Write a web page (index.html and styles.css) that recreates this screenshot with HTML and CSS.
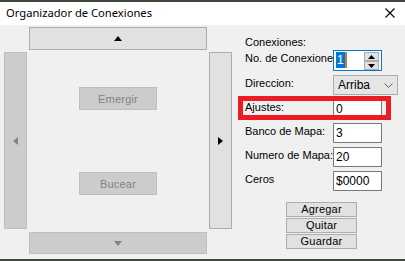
FILE: index.html
```html
<!DOCTYPE html>
<html lang="es">
<head>
  <meta charset="UTF-8">
  <meta name="viewport" content="width=device-width, initial-scale=1.0">
  <title>Organizador de Conexiones</title>
  <link rel="stylesheet" href="styles.css">
</head>
<body>
  <div class="desk-edge"></div>
  <div class="window">
    <header class="titlebar">
      <span class="title">Organizador de Conexiones</span>
      <svg class="close" width="10" height="10" viewBox="0 0 10 10">
        <path d="M0.5 0.5 L9.5 9.5 M9.5 0.5 L0.5 9.5" stroke="#000" stroke-width="1.1" fill="none"/>
      </svg>
    </header>

    <main class="client">
      <!-- map navigation pad -->
      <section class="nav-pad">
        <button class="btn nav-up">
          <svg width="8" height="5" viewBox="0 0 8 5"><polygon points="0,5 8,5 4,0" fill="#000"/></svg>
        </button>
        <button class="btn off nav-left">
          <svg width="5" height="8" viewBox="0 0 5 8"><polygon points="5,0 5,8 0,4" fill="#838383"/></svg>
        </button>
        <div class="nav-center">
          <button class="btn off action">Emergir</button>
          <button class="btn off action">Bucear</button>
        </div>
        <button class="btn nav-right">
          <svg width="5" height="8" viewBox="0 0 5 8"><polygon points="0,0 0,8 5,4" fill="#000"/></svg>
        </button>
        <button class="btn off nav-down">
          <svg width="8" height="5" viewBox="0 0 8 5"><polygon points="0,0 8,0 4,5" fill="#838383"/></svg>
        </button>
      </section>

      <!-- connection properties -->
      <section class="props">
        <div class="heading">Conexiones:</div>
        <div class="fields">
          <label class="lbl">No. de Conexiones</label>
          <div class="spin">
            <span class="sel">1</span><span class="caret"></span>
            <div class="spin-btns">
              <span class="spin-btn"><svg width="7" height="4" viewBox="0 0 7 4"><polygon points="0,4 7,4 3.5,0" fill="#000"/></svg></span>
              <span class="spin-btn"><svg width="7" height="4" viewBox="0 0 7 4"><polygon points="0,0 7,0 3.5,4" fill="#000"/></svg></span>
            </div>
          </div>

          <label class="lbl">Direccion:</label>
          <div class="combo">
            <span>Arriba</span>
            <svg width="9" height="5" viewBox="0 0 9 5"><path d="M0.5 0.5 L4.5 4.5 L8.5 0.5" stroke="#606060" fill="none"/></svg>
          </div>

          <label class="lbl">Ajustes:</label>
          <div class="field">0</div>

          <label class="lbl">Banco de Mapa:</label>
          <div class="field">3</div>

          <label class="lbl">Numero de Mapa:</label>
          <div class="field">20</div>

          <label class="lbl">Ceros</label>
          <div class="field">$0000</div>
        </div>

        <div class="actions">
          <button class="btn small">Agregar</button>
          <button class="btn small">Quitar</button>
          <button class="btn small">Guardar</button>
        </div>
      </section>

      <div class="highlight"></div>
    </main>
  </div>
  <div class="desk-edge"></div>
</body>
</html>
```

FILE: styles.css
```css
/* Classic windows dialog look */
body {
  margin: 0;
  width: 405px;
  height: 261px;
  overflow: hidden;
  background-color: #3d4a38;
  font-family: "Liberation Sans", Arial, sans-serif;
  font-size: 11px;
  color: #000;
}
.desk-edge {
  height: 2px;
  background-color: #3e4b3a;
}
.window {
  height: 257px;
  display: flex;
  flex-direction: column;
}
.titlebar {
  box-sizing: border-box;
  height: 23px;
  flex: none;
  background-color: #fff;
  display: flex;
  align-items: center;
  justify-content: space-between;
  padding: 0 10px 2px 6px;
}
.title {
  font-family: "Noto Sans", "Open Sans", sans-serif;
  font-size: 11.2px;
}
.close {
  display: block;
  margin-top: 1px;
}
.client {
  position: relative;
  flex: 1;
  background-color: #f0f0f0;
  display: flex;
  align-items: flex-start;
  padding: 2px 0 0 4px;
}

/* buttons */
.btn {
  box-sizing: border-box;
  margin: 0;
  padding: 0;
  background-color: #e1e1e1;
  border: 1px solid #adadad;
  font-family: "Liberation Sans", Arial, sans-serif;
  font-size: 11px;
  color: #000;
  display: flex;
  align-items: center;
  justify-content: center;
}
.btn.off {
  background-color: #cccccc;
  border-color: #bfbfbf;
  color: #838383;
}

/* navigation pad */
.nav-pad {
  display: grid;
  grid-template-columns: 23px 178px 23px;
  grid-template-rows: 23px 177px 23px;
  column-gap: 2px;
  row-gap: 2px;
}
.nav-up { grid-column: 2; grid-row: 1; }
.nav-left { grid-column: 1; grid-row: 2; }
.nav-right { grid-column: 3; grid-row: 2; }
.nav-down { grid-column: 2; grid-row: 3; margin-top: 1px; }
.nav-up svg { margin-top: -1px; }
.nav-center {
  grid-column: 2;
  grid-row: 2;
  display: flex;
  flex-direction: column;
  align-items: center;
  justify-content: space-between;
  padding: 35px 0 34px;
}
.action {
  width: 78px;
  height: 23px;
  letter-spacing: 0.2px;
}

/* properties column */
.props {
  margin-left: 13px;
  padding-top: 7px;
}
.heading {
  height: 16px;
  line-height: 14px;
  padding-top: 1px;
  box-sizing: border-box;
}
.fields {
  display: grid;
  grid-template-columns: 88px auto;
  grid-template-rows: 21px repeat(5, 20px);
  row-gap: 4px;
}
.lbl {
  white-space: nowrap;
  padding-top: 2px;
  line-height: 13px;
}
.field, .spin, .combo {
  position: relative;
  box-sizing: border-box;
  background-color: #fff;
  border: 1px solid #7a7a7a;
  width: 49px;
  font-size: 12px;
  line-height: 16px;
  padding: 1px 0 0 2px;
}
.spin {
  border-color: #0078d7;
  display: flex;
  align-items: flex-start;
}
.sel {
  background-color: #0078d7;
  color: #fff;
  padding: 0 1px;
  line-height: 16px;
}
.caret {
  width: 2px;
  height: 16px;
  background-color: #d2742a;
}
.spin-btns {
  margin-left: auto;
  margin-right: 2px;
  display: flex;
  flex-direction: column;
}
.spin-btn {
  box-sizing: border-box;
  width: 15px;
  height: 9px;
  background-color: #e1e1e1;
  border: 1px solid #adadad;
  display: flex;
  align-items: center;
  justify-content: center;
}
.combo {
  width: 65px;
  background-color: #e5e5e5;
  border-color: #acacac;
  display: flex;
  align-items: center;
  justify-content: space-between;
  padding: 0 4px;
}
.actions {
  margin: 11px 0 0 41px;
  display: flex;
  flex-direction: column;
  gap: 1px;
}
.small {
  width: 71px;
  height: 15px;
  line-height: 13px;
  letter-spacing: 0.2px;
}

/* red annotation drawn over the dialog */
.highlight {
  position: absolute;
  left: 238px;
  top: 71px;
  width: 153px;
  height: 24px;
  box-sizing: border-box;
  border: 5px solid #ed1c24;
}
```
